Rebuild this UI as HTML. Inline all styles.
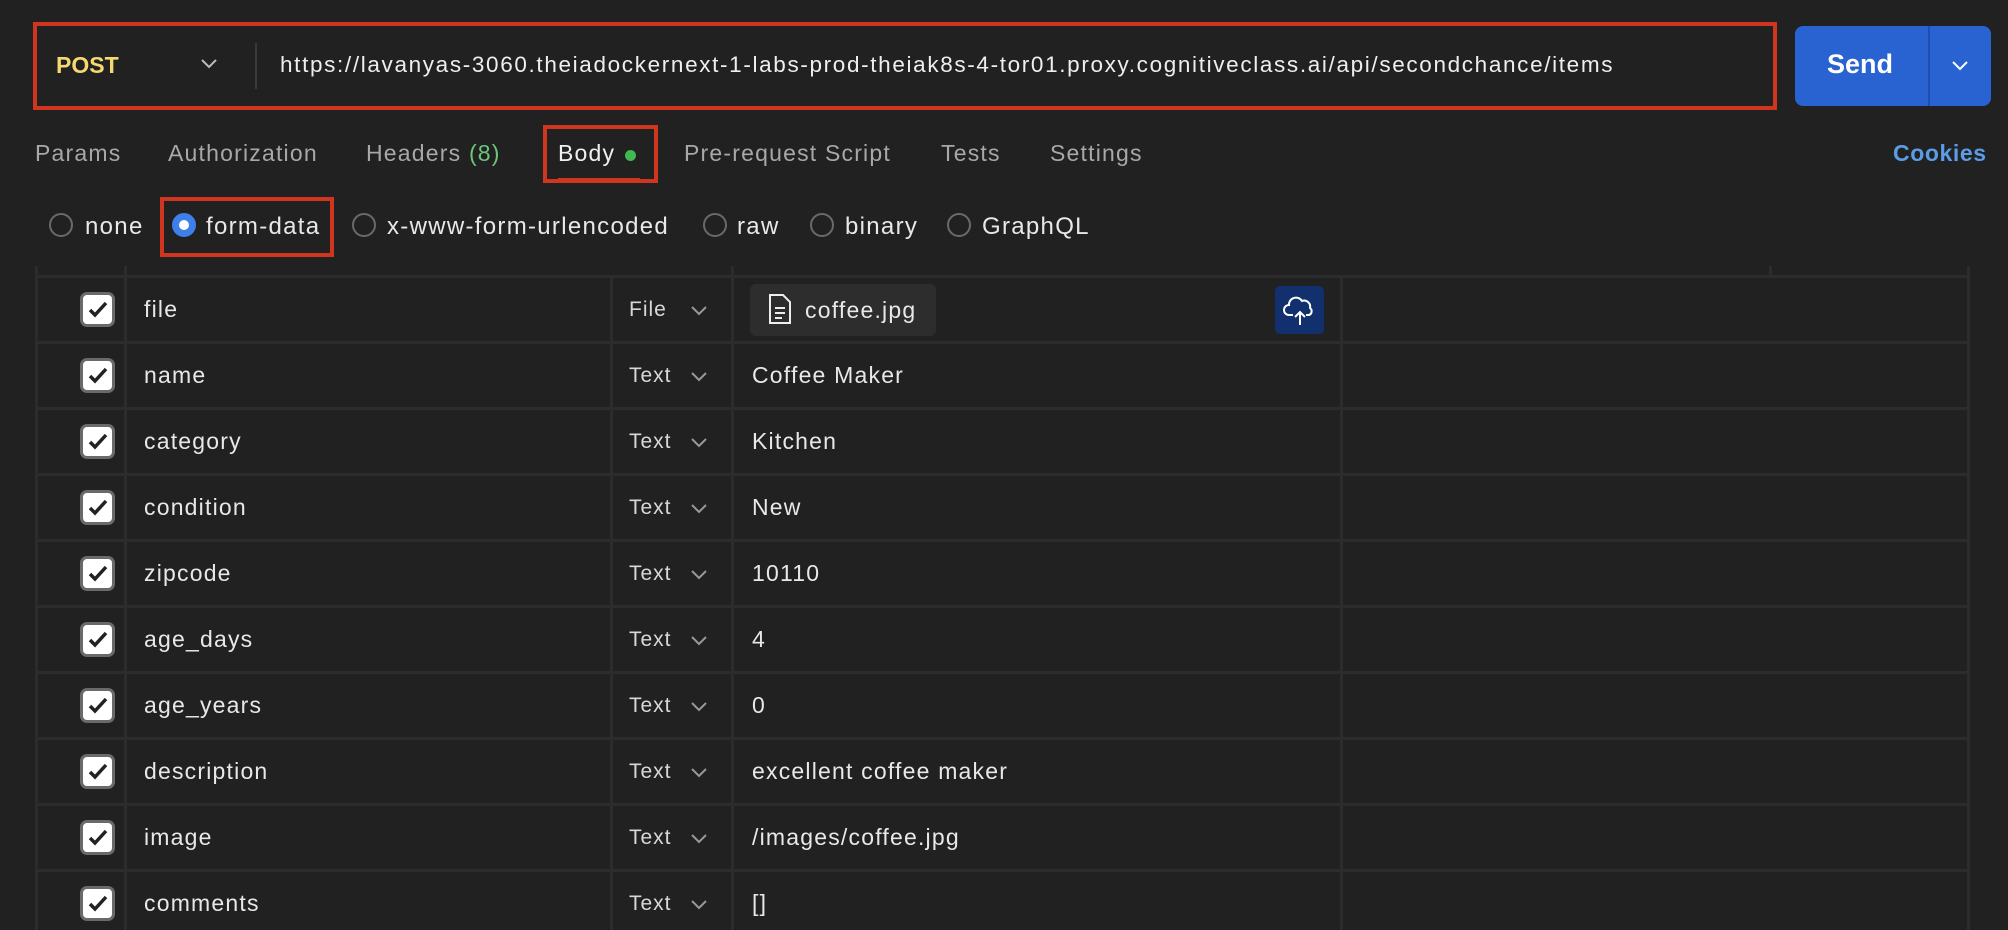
<!DOCTYPE html>
<html><head><meta charset="utf-8"><style>
*{margin:0;padding:0;box-sizing:border-box}
body{width:2008px;height:930px;background:#212121;font-family:"Liberation Sans",sans-serif;color:#e8e8e8;position:relative;overflow:hidden}
.a{position:absolute;white-space:nowrap}
.red{position:absolute;border:4px solid #d0351f}
.tab{position:absolute;top:140px;font-size:23px;color:#a8a8a8;letter-spacing:1.2px;white-space:nowrap}
.rad{position:absolute;top:213px;width:24px;height:24px;border:2px solid #6a6a6a;border-radius:50%}
.rt{position:absolute;top:213px;font-size:24px;color:#e8e8e8;letter-spacing:1.3px;white-space:nowrap}
.hl{position:absolute;left:35px;width:1933px;height:3px;background:#2c2c2c}
.vl{position:absolute;width:3px;background:#2c2c2c}
.cb{position:absolute;left:80px;width:35px;height:35px;background:#fff;border:3px solid #6a6a6a;border-radius:7px}
.cb svg{position:absolute;left:5px;top:6px}
.t{position:absolute;font-size:23px;color:#e8e8e8;letter-spacing:1.2px;white-space:nowrap}
.ty{position:absolute;left:629px;font-size:21px;color:#d8d8d8;letter-spacing:1px}
.ch{position:absolute;left:690px}
</style></head><body>
<div class="a" style="left:33px;top:23px;width:1742px;height:85px;border:1px solid #3a3a3a;border-radius:6px"></div>
<div class="red" style="left:33px;top:22px;width:1744px;height:88px"></div>
<div class="a" style="left:56px;top:52px;font-size:23px;font-weight:bold;color:#f5d86e">POST</div>
<svg class="a" style="left:201px;top:58px" width="16" height="12" viewBox="0 0 16 12"><path d="M1 2l7 7 7-7" fill="none" stroke="#bbb" stroke-width="2"/></svg>
<div class="a" style="left:255px;top:43px;width:2px;height:46px;background:#3a3a3a"></div>
<div class="a" style="left:280px;top:52px;font-size:22.5px;color:#eee;letter-spacing:1.65px">https://lavanyas-3060.theiadockernext-1-labs-prod-theiak8s-4-tor01.proxy.cognitiveclass.ai/api/secondchance/items</div>
<div class="a" style="left:1795px;top:26px;width:196px;height:80px;background:#2962d1;border-radius:8px"></div>
<div class="a" style="left:1928px;top:26px;width:2px;height:80px;background:#1f4fae"></div>
<div class="a" style="left:1827px;top:49px;font-size:27px;font-weight:bold;color:#fff">Send</div>
<svg class="a" style="left:1952px;top:60px" width="16" height="12" viewBox="0 0 16 12"><path d="M1 2l7 7 7-7" fill="none" stroke="#fff" stroke-width="2"/></svg>
<div class="tab" style="left:35px">Params</div>
<div class="tab" style="left:168px">Authorization</div>
<div class="tab" style="left:366px">Headers <span style="color:#6cc57a">(8)</span></div>
<div class="tab" style="left:558px;color:#f0f0f0">Body</div>
<div class="a" style="left:625px;top:150px;width:11px;height:11px;border-radius:50%;background:#3fb950"></div>
<div class="a" style="left:558px;top:178px;width:82px;height:3px;background:#d0351f"></div>
<div class="red" style="left:543px;top:125px;width:115px;height:58px"></div>
<div class="tab" style="left:684px">Pre-request Script</div>
<div class="tab" style="left:941px">Tests</div>
<div class="tab" style="left:1050px">Settings</div>
<div class="tab" style="left:1893px;color:#5c9ce6;font-weight:bold;letter-spacing:0.6px">Cookies</div>
<div class="rad" style="left:49px"></div><div class="rt" style="left:85px">none</div>
<div class="rad" style="left:172px;border:7px solid #3f7fe8;background:#fff"></div><div class="rt" style="left:206px">form-data</div>
<div class="red" style="left:160px;top:197px;width:174px;height:60px"></div>
<div class="rad" style="left:352px"></div><div class="rt" style="left:387px">x-www-form-urlencoded</div>
<div class="rad" style="left:703px"></div><div class="rt" style="left:737px">raw</div>
<div class="rad" style="left:810px"></div><div class="rt" style="left:845px">binary</div>
<div class="rad" style="left:947px"></div><div class="rt" style="left:982px">GraphQL</div>
<div class="vl" style="left:35px;top:266px;height:664px"></div>
<div class="vl" style="left:124px;top:266px;height:664px"></div>
<div class="vl" style="left:610px;top:276px;height:654px"></div>
<div class="vl" style="left:731px;top:266px;height:664px"></div>
<div class="vl" style="left:1340px;top:276px;height:654px"></div>
<div class="vl" style="left:1769px;top:266px;height:11px"></div>
<div class="vl" style="left:1967px;top:266px;height:664px"></div>
<div class="hl" style="top:275px"></div>
<div class="hl" style="top:341px"></div>
<div class="hl" style="top:407px"></div>
<div class="hl" style="top:473px"></div>
<div class="hl" style="top:539px"></div>
<div class="hl" style="top:605px"></div>
<div class="hl" style="top:671px"></div>
<div class="hl" style="top:737px"></div>
<div class="hl" style="top:803px"></div>
<div class="hl" style="top:869px"></div>
<div class="a" style="left:750px;top:284px;width:186px;height:52px;background:#2d2d2d;border-radius:6px"></div>
<svg class="a" style="left:768px;top:293px" width="24" height="32" viewBox="0 0 24 32"><path d="M2 2h13l7 7v21H2z" fill="none" stroke="#eee" stroke-width="2"/><path d="M7 15h10M7 20h10M7 25h7" stroke="#eee" stroke-width="2"/></svg>
<div class="t" style="left:805px;top:297px">coffee.jpg</div>
<div class="a" style="left:1275px;top:286px;width:49px;height:48px;background:#12306d;border-radius:5px"></div>
<svg class="a" style="left:1283px;top:293px" width="34" height="34" viewBox="0 0 34 34"><path d="M10 22H6a5 5 0 0 1 0-10 7 7 0 0 1 13-4 6 6 0 0 1 8 7 4 4 0 0 1-1 7h-3" fill="none" stroke="#fff" stroke-width="2"/><path d="M17 32V19M12 24l5-5 5 5" fill="none" stroke="#fff" stroke-width="2"/></svg>
<div id="rows"></div>
<script>
var rows=[["file","File",""],["name","Text","Coffee Maker"],["category","Text","Kitchen"],["condition","Text","New"],["zipcode","Text","10110"],["age_days","Text","4"],["age_years","Text","0"],["description","Text","excellent coffee maker"],["image","Text","/images/coffee.jpg"],["comments","Text","[]"]];
var h="";
rows.forEach(function(r,i){var top=277+i*66;
h+='<div class="cb" style="top:'+(top+15)+'px"><svg width="20" height="17" viewBox="0 0 20 17"><path d="M2 9l5 5L18 2" fill="none" stroke="#222" stroke-width="3.5"/></svg></div>';
h+='<div class="t" style="left:144px;top:'+(top+19)+'px">'+r[0]+'</div>';
h+='<div class="ty" style="top:'+(top+21)+'px">'+r[1]+'</div>';
h+='<svg class="ch" style="top:'+(top+28)+'px" width="18" height="11" viewBox="0 0 18 11"><path d="M2 2l7 7 7-7" fill="none" stroke="#999" stroke-width="2"/></svg>';
if(r[2])h+='<div class="t" style="left:752px;top:'+(top+19)+'px">'+r[2]+'</div>';});
document.getElementById("rows").innerHTML=h;
</script>
</body></html>
